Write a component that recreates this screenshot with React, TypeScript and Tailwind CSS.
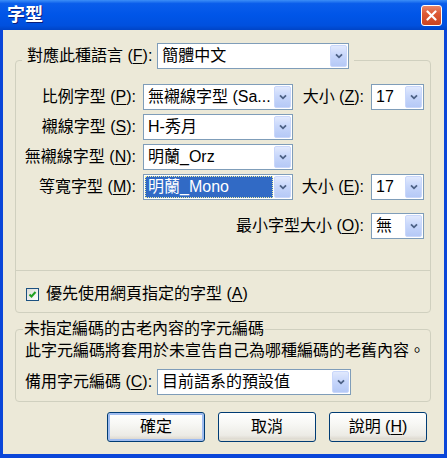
import type { ReactNode } from "react";

function Arrow() {
  return (
    <div className="flex h-full w-[17px] shrink-0 items-center justify-center rounded-[2px] border border-[#C9D7FB] bg-[linear-gradient(180deg,#E1E9FD_0%,#C8D7FB_45%,#B5C9F6_100%)]">
      <svg width="8" height="6" viewBox="0 0 8 6">
        <path d="M1 1.3 L4 4.3 L7 1.3" fill="none" stroke="#4D6185" strokeWidth="1.8" />
      </svg>
    </div>
  );
}

function Combo({
  value,
  className,
  active,
}: {
  value: ReactNode;
  className: string;
  active?: boolean;
}) {
  return (
    <div
      className={`flex h-[26px] shrink-0 items-stretch border border-[#7F9DB9] bg-white p-[1px] ${className}`}
    >
      <div className="flex min-w-0 flex-1 items-stretch pr-[1px]">
        {active ? (
          <span className="flex w-full items-center bg-[#316AC5] pl-[3px] text-white outline-1 outline-offset-[-1px] outline-dotted outline-[#F0F0A0]">
            {value}
          </span>
        ) : (
          <span className="flex w-full items-center overflow-hidden whitespace-nowrap pl-[3px]">
            {value}
          </span>
        )}
      </div>
      <Arrow />
    </div>
  );
}

function Key({ k }: { k: string }) {
  return <span className="underline underline-offset-2">{k}</span>;
}

function Label({ text, k, className }: { text: string; k: string; className: string }) {
  return (
    <span className={`whitespace-nowrap ${className}`}>
      {text} (<Key k={k} />):
    </span>
  );
}

function Button({ children, isDefault }: { children: ReactNode; isDefault?: boolean }) {
  return (
    <button
      className={`h-[30px] w-[98px] rounded-[3px] border border-[#003C74] bg-[linear-gradient(180deg,#FFFFFF_0%,#F7F7F4_40%,#ECEBE5_80%,#D6D0C5_100%)] text-[16px] text-black ${
        isDefault ? "shadow-[inset_0_0_0_2px_#9FBCF0]" : "shadow-[inset_0_-2px_0_#E3E0D4]"
      }`}
    >
      {children}
    </button>
  );
}

export default function App() {
  return (
    <div className="flex h-[458px] w-[447px] flex-col bg-[#0A46D9] font-['Liberation_Sans','Noto_Sans_CJK_TC',sans-serif] text-[16px] leading-[20px] text-black">
      {/* title bar */}
      <div className="flex h-[30px] shrink-0 items-center justify-between bg-[linear-gradient(180deg,#3C8EF7_0%,#0A5DEB_12%,#0055E8_50%,#0050DE_85%,#0044C6_100%)] pl-[7px] pr-[5px]">
        <span className="text-[18px] font-bold leading-none text-white [text-shadow:1px_1px_#0A1E7A]">
          字型
        </span>
        <div className="flex h-[21px] w-[21px] items-center justify-center rounded-[3px] border border-white bg-[linear-gradient(180deg,#E8866A_0%,#DD5A35_40%,#CC4420_100%)]">
          <svg width="11" height="11" viewBox="0 0 11 11">
            <path d="M1.5 1.5 L9.5 9.5 M9.5 1.5 L1.5 9.5" stroke="white" strokeWidth="2.2" strokeLinecap="round" />
          </svg>
        </div>
      </div>

      {/* body */}
      <div className="mx-[3px] mb-[4px] flex flex-1 flex-col bg-[#ECE9D8]">
        <fieldset className="ml-[12px] mr-[13px] mt-[13px] rounded-[4px] border border-[#D0D0BF]">
          <legend className="ml-[6px] px-[5px] pb-[8px]">
            <div className="flex items-center gap-[5px]">
              <Label text="對應此種語言" k="F" className="" />
              <Combo value="簡體中文" className="w-[192px]" />
            </div>
          </legend>

          <div className="flex w-[408px] flex-col gap-[4px] pt-[7px]">
            <div className="flex items-center">
              <Label text="比例字型" k="P" className="w-[120px] text-right" />
              <Combo value="無襯線字型 (Sa..." className="ml-[7px] w-[150px]" />
              <Label text="大小" k="Z" className="w-[78px] pr-[7px] text-right" />
              <Combo value="17" className="w-[53px]" />
            </div>
            <div className="flex items-center">
              <Label text="襯線字型" k="S" className="w-[120px] text-right" />
              <Combo value="H-秀月" className="ml-[7px] w-[150px]" />
            </div>
            <div className="flex items-center">
              <Label text="無襯線字型" k="N" className="w-[120px] text-right" />
              <Combo value="明蘭_Orz" className="ml-[7px] w-[150px]" />
            </div>
            <div className="flex items-center">
              <Label text="等寬字型" k="M" className="w-[120px] text-right" />
              <Combo value="明蘭_Mono" className="ml-[7px] w-[150px]" active />
              <Label text="大小" k="E" className="w-[78px] pr-[7px] text-right" />
              <Combo value="17" className="w-[53px]" />
            </div>
            <div className="mt-[9px] flex items-center">
              <Label text="最小字型大小" k="O" className="flex-1 pr-[7px] text-right" />
              <Combo value="無" className="w-[53px]" />
            </div>
          </div>

          <div className="mt-[31px] h-px bg-[#D0D0BF]" />

          <div className="mt-[11px] mb-[6px] flex h-[24px] items-center pl-[10px]">
            <div className="flex h-[13px] w-[13px] items-center justify-center border border-[#1C5180] bg-[linear-gradient(135deg,#DCDCD7_0%,#FFFFFF_100%)]">
              <svg width="9" height="9" viewBox="0 0 9 9">
                <path d="M1.5 4.5 L3.5 6.5 L7.5 2" fill="none" stroke="#21A121" strokeWidth="2" />
              </svg>
            </div>
            <span className="ml-[7px] whitespace-nowrap">
              優先使用網頁指定的字型 (<Key k="A" />)
            </span>
          </div>
        </fieldset>

        <fieldset className="ml-[12px] mr-[13px] mt-[6px] rounded-[4px] border border-[#D0D0BF]">
          <legend className="ml-[7px] px-px">未指定編碼的古老內容的字元編碼</legend>
          <div className="mt-[2px] whitespace-nowrap pl-[9px]">
            此字元編碼將套用於未宣告自己為哪種編碼的老舊內容。
          </div>
          <div className="mb-[6px] mt-[8px] flex items-center pl-[9px]">
            <Label text="備用字元編碼" k="C" className="w-[132px]" />
            <Combo value="目前語系的預設值" className="w-[194px]" />
          </div>
        </fieldset>

        <div className="mt-[10px] flex justify-end gap-[13px] pr-[17px]">
          <Button isDefault>確定</Button>
          <Button>取消</Button>
          <Button>
            說明 (<Key k="H" />)
          </Button>
        </div>
      </div>
    </div>
  );
}
